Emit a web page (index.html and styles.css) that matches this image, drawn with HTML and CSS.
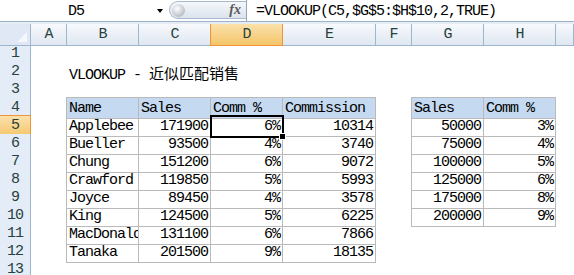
FILE: index.html
```html
<!DOCTYPE html>
<html lang="zh-CN">
<head>
    <meta charset="UTF-8">
    <title>VLOOKUP - 近似匹配销售</title>
    <link rel="stylesheet" href="styles.css">
</head>
<body>
    <!-- Formula bar -->
    <div class="formula-bar">
        <div class="name-box">D5</div>
        <div class="name-drop"><span class="arrow"></span></div>
        <div class="fx-box">
            <span class="knob"></span>
            <span class="fx">fx</span>
        </div>
        <div class="formula">=VLOOKUP(C5,$G$5:$H$10,2,TRUE)</div>
    </div>
    <div class="gap"></div>

    <!-- Sheet -->
    <div class="sheet">
        <div class="row col-heads">
            <div class="corner"><span class="tri"></span></div>
            <div class="ch">A</div>
            <div class="ch">B</div>
            <div class="ch">C</div>
            <div class="ch sel">D</div>
            <div class="ch">E</div>
            <div class="ch">F</div>
            <div class="ch">G</div>
            <div class="ch">H</div>
            <div class="ch"></div>
        </div>

        <div class="row"><div class="rh">1</div></div>
        <div class="row">
            <div class="rh">2</div>
            <div class="cell b">VLOOKUP - <span class="cjk">近似匹配销售</span></div>
        </div>
        <div class="row"><div class="rh">3</div></div>

        <div class="row">
            <div class="rh">4</div>
            <div class="cell b t hd bt bl">Name</div>
            <div class="cell c t hd bt">Sales</div>
            <div class="cell d t hd bt">Comm %</div>
            <div class="cell e t hd bt">Commission</div>
            <div class="cell g t hd bt bl">Sales</div>
            <div class="cell h t hd bt">Comm %</div>
        </div>
        <div class="row">
            <div class="rh sel">5</div>
            <div class="cell b t bl">Applebee</div>
            <div class="cell c t num">171900</div>
            <div class="cell d t num active">6%</div>
            <div class="cell e t num">10314</div>
            <div class="cell g t bl num">50000</div>
            <div class="cell h t num">3%</div>
        </div>
        <div class="row">
            <div class="rh">6</div>
            <div class="cell b t bl">Bueller</div>
            <div class="cell c t num">93500</div>
            <div class="cell d t num">4%</div>
            <div class="cell e t num">3740</div>
            <div class="cell g t bl num">75000</div>
            <div class="cell h t num">4%</div>
        </div>
        <div class="row">
            <div class="rh">7</div>
            <div class="cell b t bl">Chung</div>
            <div class="cell c t num">151200</div>
            <div class="cell d t num">6%</div>
            <div class="cell e t num">9072</div>
            <div class="cell g t bl num">100000</div>
            <div class="cell h t num">5%</div>
        </div>
        <div class="row">
            <div class="rh">8</div>
            <div class="cell b t bl">Crawford</div>
            <div class="cell c t num">119850</div>
            <div class="cell d t num">5%</div>
            <div class="cell e t num">5993</div>
            <div class="cell g t bl num">125000</div>
            <div class="cell h t num">6%</div>
        </div>
        <div class="row">
            <div class="rh">9</div>
            <div class="cell b t bl">Joyce</div>
            <div class="cell c t num">89450</div>
            <div class="cell d t num">4%</div>
            <div class="cell e t num">3578</div>
            <div class="cell g t bl num">175000</div>
            <div class="cell h t num">8%</div>
        </div>
        <div class="row">
            <div class="rh">10</div>
            <div class="cell b t bl">King</div>
            <div class="cell c t num">124500</div>
            <div class="cell d t num">5%</div>
            <div class="cell e t num">6225</div>
            <div class="cell g t bl num">200000</div>
            <div class="cell h t num">9%</div>
        </div>
        <div class="row">
            <div class="rh">11</div>
            <div class="cell b t bl clip">MacDonald</div>
            <div class="cell c t num">131100</div>
            <div class="cell d t num">6%</div>
            <div class="cell e t num">7866</div>
        </div>
        <div class="row">
            <div class="rh">12</div>
            <div class="cell b t bl">Tanaka</div>
            <div class="cell c t num">201500</div>
            <div class="cell d t num">9%</div>
            <div class="cell e t num">18135</div>
        </div>
        <div class="row"><div class="rh">13</div></div>
    </div>
</body>
</html>
```

FILE: styles.css
```css
body {
    margin: 0;
    font-family: "Liberation Mono", "Noto Sans CJK SC", monospace;
    font-size: 15px;
    letter-spacing: -1px;
    color: #000;
    background-color: #fff;
    overflow: hidden;
}

/* formula bar */
.formula-bar {
    display: flex;
    height: 21px;
    border-bottom: 1px solid #9db3cd;
    background-color: #fff;
}
.name-box {
    width: 152px;
    line-height: 21px;
    padding-top: 1px;
    text-align: center;
    box-sizing: border-box;
}
.name-drop {
    width: 17px;
    display: flex;
    align-items: center;
}
.arrow {
    margin-left: 5px;
    margin-top: 1px;
    border-left: 3px solid transparent;
    border-right: 3px solid transparent;
    border-top: 4px solid #000;
}
.fx-box {
    display: flex;
    align-items: center;
    width: 77px;
    height: 18px;
    margin-top: 1px;
    box-sizing: border-box;
    border: 1px solid #a9b8cc;
    border-right: none;
    border-radius: 10px 0 0 10px;
    background: linear-gradient(#f4f7fb, #dde4ee);
    position: relative;
}
.fx-box::after {
    content: "";
    position: absolute;
    right: -1px;
    top: -2px;
    bottom: -3px;
    width: 1px;
    background-color: #8ea4bf;
}
.knob {
    width: 13px;
    height: 13px;
    margin-left: 2px;
    border-radius: 50%;
    background: radial-gradient(circle at 40% 35%, #ffffff 0%, #d2d6dc 45%, #9ea4ad 100%);
}
.fx {
    margin-left: auto;
    margin-right: 5px;
    font-family: "Liberation Serif", serif;
    font-style: italic;
    font-weight: bold;
    font-size: 14px;
    letter-spacing: 0;
    color: #5a5a5a;
}
.formula {
    padding-left: 10px;
    line-height: 21px;
    padding-top: 1px;
}
.gap {
    height: 2px;
    background-color: #e6ecf4;
}

/* sheet */
.row {
    display: grid;
    grid-template-columns: 31px 36px 72px 72px 72px 93px 36px 72px 72px 1fr;
    height: 18px;
}
.col-heads {
    height: 20px;
}
.corner {
    grid-column: 1;
    position: relative;
    box-sizing: border-box;
    background-color: #dfe8f4;
    border-right: 1px solid #9eb6ce;
    border-bottom: 1px solid #9eb6ce;
}
.tri {
    position: absolute;
    right: 3px;
    bottom: 3px;
    width: 0;
    height: 0;
    border-left: 10px solid transparent;
    border-bottom: 10px solid #f4f7fb;
}
.ch {
    box-sizing: border-box;
    text-align: center;
    line-height: 20px;
    padding-top: 1px;
    color: #27413e;
    background: linear-gradient(#f7f9fc, #dfe7f1);
    border-right: 1px solid #9eb6ce;
    border-bottom: 1px solid #9eb6ce;
}
.ch.sel {
    background: linear-gradient(#fbe1ab, #f4c56a);
    border-bottom-color: #f29436;
    box-shadow: -1px 0 0 #f29436;
    border-right-color: #f29436;
}
.rh {
    grid-column: 1;
    box-sizing: border-box;
    text-align: center;
    line-height: 18px;
    padding-top: 1px;
    color: #27413e;
    background-color: #e4ecf7;
    border-right: 1px solid #9eb6ce;
}
.rh.sel {
    background: linear-gradient(#fbe1ab, #f4c56a);
    border-right-color: #f29436;
    box-shadow: 0 -1px 0 #f29436, inset 0 -1px 0 #f29436;
}

.cell {
    box-sizing: border-box;
    padding: 2px 2px 0 2px;
    line-height: 18px;
    white-space: nowrap;
}
.b { grid-column: 3; }
.c { grid-column: 4; }
.d { grid-column: 5; }
.e { grid-column: 6; }
.g { grid-column: 8; }
.h { grid-column: 9; }

.cjk {
    font-family: "Noto Sans CJK SC", sans-serif;
    letter-spacing: 0;
    font-size: 15px;
}
.t {
    border-right: 1px solid #bababa;
    border-bottom: 1px solid #bababa;
}
.bt {
    box-shadow: 0 -1px 0 #bababa;
}
.bl {
    box-shadow: -1px 0 0 #bababa;
}
.bt.bl {
    box-shadow: 0 -1px 0 #bababa, -1px 0 0 #bababa, -1px -1px 0 #bababa;
}
.hd {
    background-color: #c5d9f1;
}
.num {
    text-align: right;
}
.clip {
    overflow: hidden;
}
.active {
    position: relative;
    z-index: 1;
    outline: 2px solid #000;
    outline-offset: -1px;
}
.active::after {
    content: "";
    position: absolute;
    right: -4px;
    bottom: -4px;
    width: 5px;
    height: 5px;
    background-color: #000;
    border: 1px solid #fff;
}
```
